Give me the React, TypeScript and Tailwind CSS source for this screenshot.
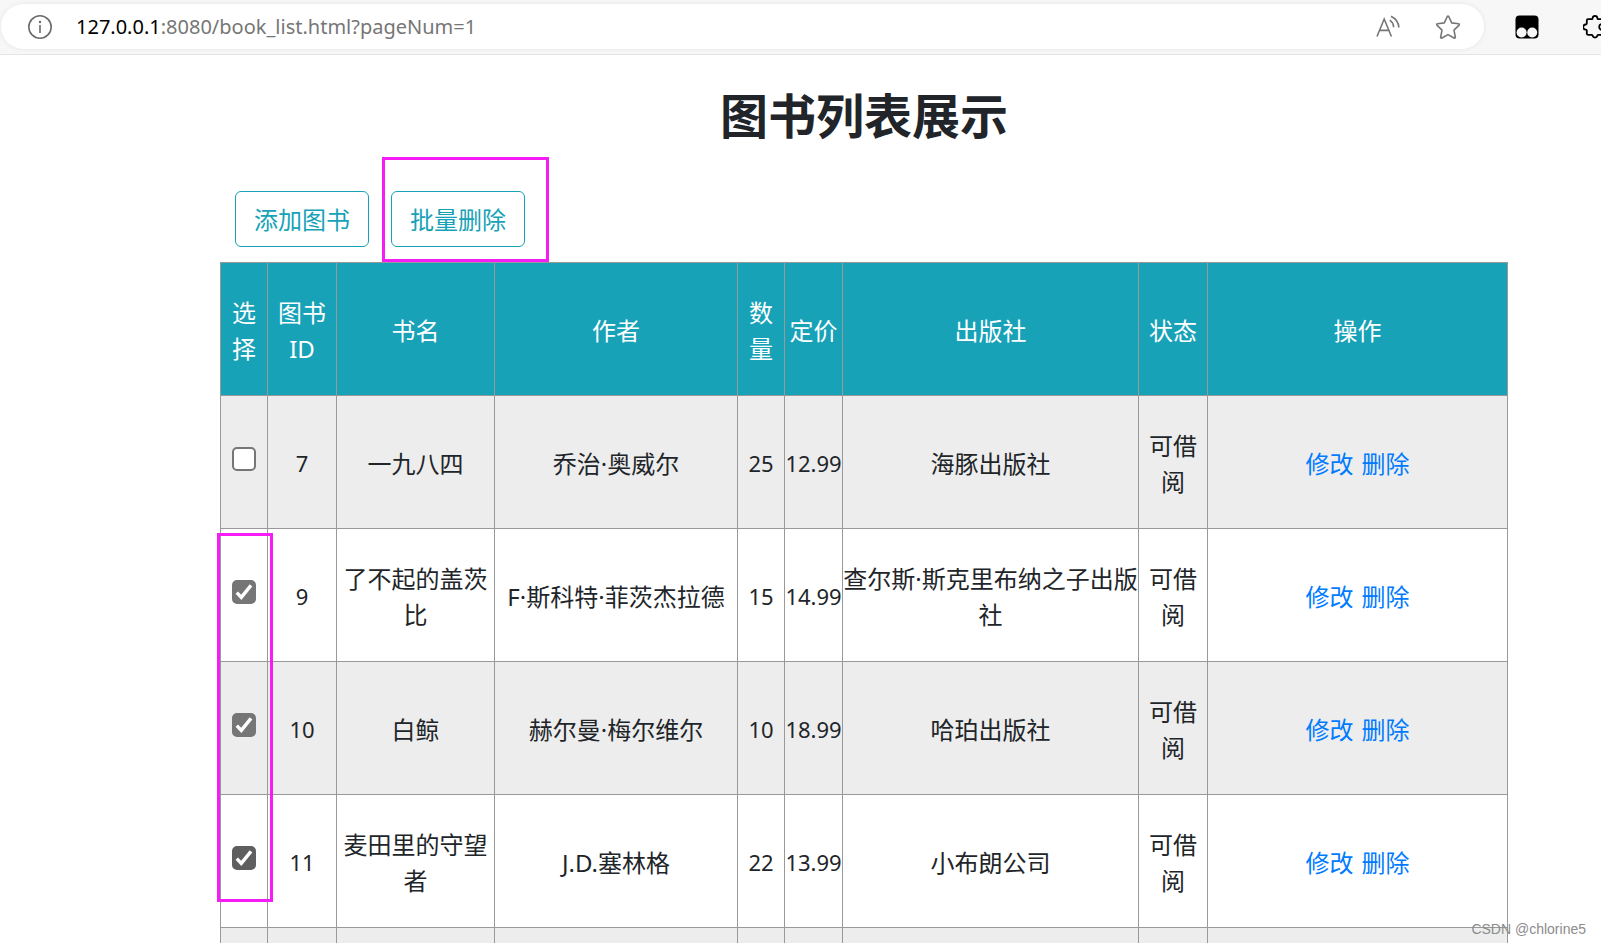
import { useState } from "react";

type Book = {
  id: number;
  name: string;
  author: string;
  count: number;
  price: string;
  publisher: string;
  selected: boolean;
  active?: boolean;
};

const initialBooks: Book[] = [
  { id: 7, name: "一九八四", author: "乔治·奥威尔", count: 25, price: "12.99", publisher: "海豚出版社", selected: false },
  { id: 9, name: "了不起的盖茨比", author: "F·斯科特·菲茨杰拉德", count: 15, price: "14.99", publisher: "查尔斯·斯克里布纳之子出版社", selected: true },
  { id: 10, name: "白鲸", author: "赫尔曼·梅尔维尔", count: 10, price: "18.99", publisher: "哈珀出版社", selected: true },
  { id: 11, name: "麦田里的守望者", author: "J.D.塞林格", count: 22, price: "13.99", publisher: "小布朗公司", selected: true, active: true },
];

const headings = ["选择", "图书ID", "书名", "作者", "数量", "定价", "出版社", "状态", "操作"];

const cell = "border border-[#999999] p-0 pt-1";
const numberCell = "border border-[#999999] p-0 pt-0.5 text-[22px]";
const outlineButton = "h-14 rounded-md border border-[#17a2b8] px-[18px] pt-0.5 text-[#17a2b8]";

function AddressBar() {
  return (
    <header className="flex h-[55px] shrink-0 items-center overflow-hidden border-b border-[#e4e4e4] bg-[#f7f7f7] pb-px pl-px">
      <div className="flex h-[45px] min-w-0 flex-1 items-center rounded-full bg-white pr-6 pl-[27px] shadow-[0_0_5px_rgba(0,0,0,0.08)]">
        <svg className="size-6 shrink-0" viewBox="0 0 24 24" fill="none" stroke="#6b6b6b" strokeWidth="1.6" aria-hidden="true">
          <circle cx="12" cy="12" r="11.2" />
          <path d="M12 10v8" />
          <circle cx="12" cy="7" r="1.2" fill="#6b6b6b" stroke="none" />
        </svg>
        <p className="min-w-0 flex-1 truncate pl-6 text-xl leading-8 text-[#767676]">
          <span className="text-black">127.0.0.1</span>:8080/book_list.html?pageNum=1
        </p>
        <button type="button" aria-label="大声朗读" className="shrink-0">
          <svg className="size-6" viewBox="0 0 24 24" fill="none" stroke="#767676" strokeWidth="1.6">
            <path d="M1 21.500 8.200 4l7.200 17.500M3.600 15.400h9.200" />
            <path d="M13.800 5.200c2.300 1.400 3.700 4 3.800 7M15 1.200c4.600 2.200 7.600 6.400 7.900 11.300" />
          </svg>
        </button>
        <button type="button" aria-label="收藏" className="ml-9 shrink-0">
          <svg className="size-6" viewBox="0 0 24 24" fill="none" stroke="#767676" strokeWidth="1.600" strokeLinejoin="round">
            <path d="M11.300 1.500a.8.8 0 0 1 1.400 0l3 6.400 6.900.9a.8.8 0 0 1 .5 1.400l-5.100 4.900 1.300 7a.8.8 0 0 1-1.200.9L12 19.600l-6.100 3.400a.8.8 0 0 1-1.200-.9l1.300-7L.9 10.200a.8.8 0 0 1 .5-1.400l6.900-.9z" />
          </svg>
        </button>
      </div>
      <button type="button" aria-label="扩展程序" className="ml-[31px] shrink-0">
        <svg className="size-6" viewBox="0 0 24 24">
          <rect x="0.500" y="0.500" width="23" height="23" rx="4" fill="#000" />
          <circle cx="6.600" cy="17.500" r="5" fill="#f7f7f7" />
          <circle cx="17.200" cy="17.500" r="5" fill="#f7f7f7" />
        </svg>
      </button>
      <button type="button" aria-label="扩展" className="-mr-1.5 ml-11 shrink-0">
        <svg className="size-6" viewBox="0 0 24 24" fill="none" stroke="#000" strokeWidth="1.800" strokeLinejoin="round">
          <path d="M5 4.200h3.700c.7 0 .9-.4.900-1A2.500 2.500 0 0 1 12 .9a2.500 2.500 0 0 1 2.400 2.300c0 .6.2 1 .9 1h4a1.200 1.200 0 0 1 1.200 1.200v3.500h-1.200a3.100 3.100 0 0 0 0 6.200h1.200v3.500a1.200 1.200 0 0 1-1.200 1.200h-4c-.7 0-.9.400-.9 1a2.500 2.500 0 0 1-4.800 0c0-.6-.2-1-.9-1H5a1.200 1.200 0 0 1-1.200-1.200v-3c0-.7-.4-.9-1-.9a2.600 2.600 0 0 1 0-5.200c.6 0 1-.2 1-.9V5.400A1.200 1.200 0 0 1 5 4.200z" />
        </svg>
      </button>
    </header>
  );
}

function SelectBox({ book, onToggle }: { book: Book; onToggle: () => void }) {
  return (
    <label className="mx-auto mb-2.5 grid size-6 place-items-center">
      <input
        type="checkbox"
        aria-label={`选择 ${book.name}`}
        checked={book.selected}
        onChange={onToggle}
        className={
          "col-start-1 row-start-1 size-6 appearance-none rounded-[5px] border-2 bg-white " +
          (book.active
            ? "border-[#5f5f5f] checked:bg-[#5f5f5f]"
            : "border-[#767676] checked:bg-[#767676]")
        }
      />
      {book.selected && (
        <svg className="pointer-events-none col-start-1 row-start-1 size-6" viewBox="0 0 24 24" fill="none" stroke="#fff" strokeWidth="3.400" aria-hidden="true">
          <path d="m4.800 12.600 4.500 4.800L19 5.400" />
        </svg>
      )}
    </label>
  );
}

export default function App() {
  const [books, setBooks] = useState(initialBooks);
  const toggle = (id: number) =>
    setBooks((list) => list.map((b) => (b.id === id ? { ...b, selected: !b.selected } : b)));

  return (
    <div className="relative flex h-screen flex-col overflow-hidden bg-white font-['Noto_Sans','Noto_Sans_CJK_SC',sans-serif] text-[#212529]">
      <AddressBar />
      <main className="pr-[93px] pl-[220px] text-2xl leading-9">
        <h1 className="pt-8 text-center text-5xl leading-[58px] font-bold">图书列表展示</h1>
        <div className="flex gap-[22px] px-[15px] pt-[46px] pb-[15px]">
          <button type="button" className={outlineButton}>
            添加图书
          </button>
          <div className="relative">
            <button type="button" className={outlineButton}>
              批量删除
            </button>
            <div className="pointer-events-none absolute -top-[34px] -right-6 -bottom-[15px] -left-[9px] border-3 border-[#f51df5]" />
          </div>
        </div>
        <div className="relative">
          <table className="w-full table-fixed border-collapse text-center">
            <colgroup>
              <col className="w-[47px]" />
              <col className="w-[69px]" />
              <col className="w-[158px]" />
              <col className="w-[243px]" />
              <col className="w-[47px]" />
              <col className="w-[58px]" />
              <col className="w-[296px]" />
              <col className="w-[69px]" />
              <col />
            </colgroup>
            <thead>
              <tr className="h-[133px] bg-[#17a2b8] text-white">
                {headings.map((h) => (
                  <th key={h} scope="col" className={cell + " font-normal"}>
                    {h}
                  </th>
                ))}
              </tr>
            </thead>
            <tbody>
              {books.map((b) => (
                <tr key={b.id} className="h-[133px] odd:bg-[#ededed]">
                  <td className={cell}>
                    <SelectBox book={b} onToggle={() => toggle(b.id)} />
                  </td>
                  <td className={numberCell}>{b.id}</td>
                  <td className={cell}>{b.name}</td>
                  <td className={cell}>{b.author}</td>
                  <td className={numberCell}>{b.count}</td>
                  <td className={numberCell}>{b.price}</td>
                  <td className={cell}>{b.publisher}</td>
                  <td className={cell}>可借阅</td>
                  <td className={cell}>
                    <div className="flex justify-center gap-2 text-[#007bff]">
                      <a href="#edit">修改</a>
                      <a href="#delete">删除</a>
                    </div>
                  </td>
                </tr>
              ))}
              <tr className="h-[133px] odd:bg-[#ededed]">
                {headings.map((h) => (
                  <td key={h} className={cell} />
                ))}
              </tr>
            </tbody>
          </table>
          <div className="pointer-events-none absolute top-[271px] -left-[3px] h-[369px] w-14 border-3 border-[#f51df5]" />
        </div>
      </main>
      <p className="absolute right-[15px] bottom-1 font-['Liberation_Sans',sans-serif] text-sm leading-5 text-[#8c8c8c]">
        CSDN @chlorine5
      </p>
    </div>
  );
}
